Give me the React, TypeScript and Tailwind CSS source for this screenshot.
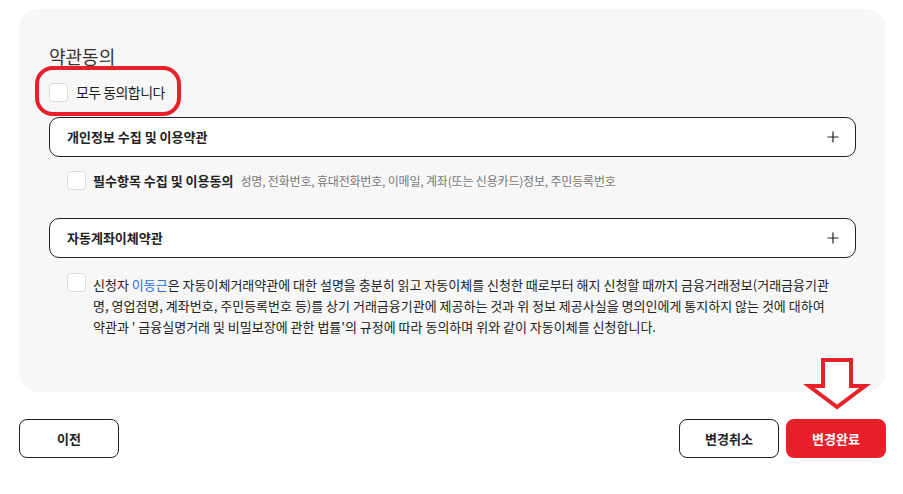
import React from "react";

const font = { fontFamily: '"Noto Sans CJK KR", "Noto Sans", sans-serif' };

function Box() {
  return <span className="block w-[19px] h-[19px] shrink-0 rounded-[4px] border border-[#d7dbe1] bg-white" />;
}

function Plus() {
  return (
    <svg width="12" height="12" viewBox="0 0 12 12" className="shrink-0">
      <path d="M6 0.5V11.5M0.5 6H11.5" stroke="#222" strokeWidth="1.2" fill="none" />
    </svg>
  );
}

function Accordion({ title }: { title: string }) {
  return (
    <div className="flex h-[40px] items-center justify-between rounded-[10px] border border-[#222] bg-white pl-[17px] pr-[16px]">
      <span className="text-[13px] font-bold text-[#222]">{title}</span>
      <Plus />
    </div>
  );
}

export default function App() {
  return (
    <div className="relative w-[903px] h-[494px] bg-white text-[#222]" style={font}>
      <div className="pt-[9px] pl-[19px] pr-[17px]">
        <div className="rounded-[20px] bg-[#f7f7f7] px-[30px] pt-[35px] pb-[55px]">
          <h2 className="text-[18px] leading-[24px] font-normal text-[#333]">약관동의</h2>
          <label className="mt-[14px] flex h-[21px] items-center gap-[8px]">
            <Box />
            <span className="text-[14px] tracking-[-0.04em] text-[#222]">모두 동의합니다</span>
          </label>
          <div className="mt-[14px]">
            <Accordion title="개인정보 수집 및 이용약관" />
          </div>
          <label className="mt-[13px] ml-[18px] flex h-[21px] items-center gap-[7px]">
            <Box />
            <span className="text-[13px] font-semibold text-[#222] whitespace-nowrap">필수항목 수집 및 이용동의</span>
            <span className="text-[12px] tracking-[-0.015em] text-[#777] whitespace-nowrap">성명, 전화번호, 휴대전화번호, 이메일, 계좌(또는 신용카드)정보, 주민등록번호</span>
          </label>
          <div className="mt-[27px]">
            <Accordion title="자동계좌이체약관" />
          </div>
          <div className="mt-[15px] ml-[18px] flex items-start gap-[7px]">
            <Box />
            <p className="mt-[1px] text-[13px] leading-[21px] text-[#222]">
              <span className="block whitespace-nowrap">
                신청자 <span className="text-[#2a6fdb]">이동근</span>은 자동이체거래약관에 대한 설명을 충분히 읽고 자동이체를 신청한 때로부터 해지 신청할 때까지 금융거래정보(거래금융기관
              </span>
              <span className="block whitespace-nowrap">
                명, 영업점명, 계좌번호, 주민등록번호 등)를 상기 거래금융기관에 제공하는 것과 위 정보 제공사실을 명의인에게 통지하지 않는 것에 대하여
              </span>
              <span className="block whitespace-nowrap">
                약관과 ' 금융실명거래 및 비밀보장에 관한 법률'의 규정에 따라 동의하며 위와 같이 자동이체를 신청합니다.
              </span>
            </p>
          </div>
        </div>
        <div className="mt-[27px] flex items-center justify-between">
          <button className="h-[39px] w-[100px] rounded-[8px] border border-[#222] bg-white text-[13px] font-bold text-[#222]">이전</button>
          <div className="flex gap-[7px]">
            <button className="h-[39px] w-[100px] rounded-[8px] border border-[#222] bg-white text-[13px] font-bold text-[#222]">변경취소</button>
            <button className="h-[39px] w-[100px] rounded-[8px] bg-[#e8202a] text-[13px] font-bold text-white">변경완료</button>
          </div>
        </div>
      </div>

      <div className="pointer-events-none absolute left-[35px] top-[66px] h-[50px] w-[146px] rounded-[18px] border-[4px] border-[#e8202a]" />
      <svg className="pointer-events-none absolute left-0 top-0" width="903" height="494">
        <polygon
          points="823,360 851,360 851,386 865,386 837,407 809,386 823,386"
          fill="white"
          stroke="#e8202a"
          strokeWidth="4"
          strokeLinejoin="miter"
        />
      </svg>
    </div>
  );
}
